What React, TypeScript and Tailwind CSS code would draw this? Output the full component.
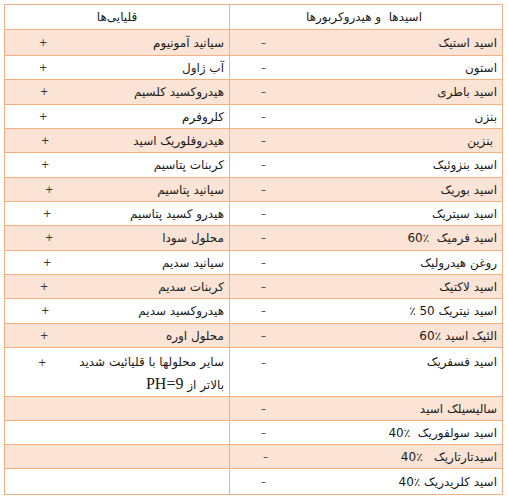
const rows = [
  { h: "h-[26px]", bg: "bg-[#FBE4D5]", acid: "اسید استیک", acidPad: "pl-[31px]", base: "سیانید آمونیوم", basePad: "pl-[34px]" },
  { h: "h-[24px]", bg: "bg-white", acid: "استون", acidPad: "pl-[31px]", base: "آب ژاول", basePad: "pl-[34px]" },
  { h: "h-[25px]", bg: "bg-[#FBE4D5]", acid: "اسید باطری", acidPad: "pl-[31px]", base: "هیدروکسید کلسیم", basePad: "pl-[35px]" },
  { h: "h-[24px]", bg: "bg-white", acid: "بنزن", acidPad: "pl-[31px]", base: "کلروفرم", basePad: "pl-[34px]" },
  { h: "h-[24px]", bg: "bg-[#FBE4D5]", acid: " بنزین", acidPad: "pl-[31px]", base: "هیدروفلوریک اسید", basePad: "pl-[36px]" },
  { h: "h-[25px]", bg: "bg-white", acid: "اسید بنزوئیک", acidPad: "pl-[31px]", base: "کربنات پتاسیم", basePad: "pl-[36px]" },
  { h: "h-[24px]", bg: "bg-[#FBE4D5]", acid: "اسید بوریک", acidPad: "pl-[31px]", base: "سیانید پتاسیم", basePad: "pl-[40px]" },
  { h: "h-[24px]", bg: "bg-white", acid: "اسید سیتریک", acidPad: "pl-[31px]", base: "هیدرو کسید پتاسیم", basePad: "pl-[38px]" },
  { h: "h-[25px]", bg: "bg-[#FBE4D5]", acid: "اسید فرمیک  ٪60", acidPad: "pl-[31px]", base: "محلول سودا", basePad: "pl-[40px]" },
  { h: "h-[24px]", bg: "bg-white", acid: "روغن هیدرولیک", acidPad: "pl-[31px]", base: "سیانید سدیم", basePad: "pl-[38px]" },
  { h: "h-[24px]", bg: "bg-[#FBE4D5]", acid: "اسید لاکتیک", acidPad: "pl-[31px]", base: "کربنات سدیم", basePad: "pl-[35px]" },
  { h: "h-[25px]", bg: "bg-white", acid: "اسید نیتریک 50 ٪", acidPad: "pl-[31px]", base: "هیدروکسید سدیم", basePad: "pl-[36px]" },
  { h: "h-[24px]", bg: "bg-[#FBE4D5]", acid: "الئیک اسید ٪60", acidPad: "pl-[31px]", base: "محلول اوره", basePad: "pl-[35px]" },
];

const tail = [
  { h: "h-[24px]", bg: "bg-[#FBE4D5]", acid: "سالیسیلک اسید", acidPad: "pl-[31px]" },
  { h: "h-[24px]", bg: "bg-white", acid: "اسید سولفوریک  ٪40", acidPad: "pl-[31px]" },
  { h: "h-[24px]", bg: "bg-[#FBE4D5]", acid: "اسیدتارتاریک   ٪40", acidPad: "pl-[33px]" },
  { h: "h-[25px]", bg: "bg-white", acid: "اسید کلریدریک ٪40", acidPad: "pl-[31px]" },
];

const font = "font-['DejaVu_Sans',sans-serif]";

function Cell({ text, sign, pad, wide }: { text: string; sign?: string; pad: string; wide?: boolean }) {
  return (
    <div
      dir="rtl"
      className={`flex items-center justify-between pr-[5px] ${pad} ${wide ? "flex-1" : "w-[225px] border-r border-[#F4B083]"}`}
    >
      <span className="whitespace-pre">{text}</span>
      {sign ? <span className="leading-none text-[10px] text-[#333]">{sign}</span> : null}
    </div>
  );
}

export default function App() {
  return (
    <div className={`min-h-screen bg-white pt-[4px] pl-[4px] text-[12px] text-[#1a1a1a] ${font}`}>
      <div className="w-[499px] border border-[#F4B083]">
        {/* header */}
        <div className="flex h-[25px] border-b border-[#F4B083] bg-white">
          <div dir="rtl" className="w-[225px] border-r border-[#F4B083] flex items-center justify-center">
            قلیایی‌ها
          </div>
          <div dir="rtl" className="flex-1 flex items-center justify-center whitespace-pre pr-[4px]">
            اسیدها  و هیدروکربورها
          </div>
        </div>

        {rows.map((r, i) => (
          <div key={i} className={`flex border-b border-[#F4B083] ${r.h} ${r.bg}`}>
            <Cell text={r.base} sign="+" pad={r.basePad} />
            <Cell text={r.acid} sign="–" pad={r.acidPad} wide />
          </div>
        ))}

        {/* tall row */}
        <div className="flex h-[49px] border-b border-[#F4B083] bg-white">
          <div dir="rtl" className="w-[225px] border-r border-[#F4B083] pr-[5px] pl-[33px] pt-[4px] leading-[21px]">
            <div className="flex justify-between items-center">
              <span>سایر محلولها با قلیائیت شدید</span>
              <span className="text-[10px] text-[#333]">+</span>
            </div>
            <div>
              بالاتر از <span className="font-['Liberation_Serif',serif] text-[16px]">PH=9</span>
            </div>
          </div>
          <div dir="rtl" className="flex-1 pr-[5px] pl-[31px] pt-[4px] leading-[21px]">
            <div className="flex justify-between items-center">
              <span>اسید فسفریک</span>
              <span className="text-[10px] text-[#333]">–</span>
            </div>
          </div>
        </div>

        {tail.map((r, i) => (
          <div
            key={i}
            className={`flex ${i < tail.length - 1 ? "border-b border-[#F4B083]" : ""} ${r.h} ${r.bg}`}
          >
            <div className="w-[225px] border-r border-[#F4B083]" />
            <Cell text={r.acid} sign="–" pad={r.acidPad} wide />
          </div>
        ))}
      </div>
    </div>
  );
}
